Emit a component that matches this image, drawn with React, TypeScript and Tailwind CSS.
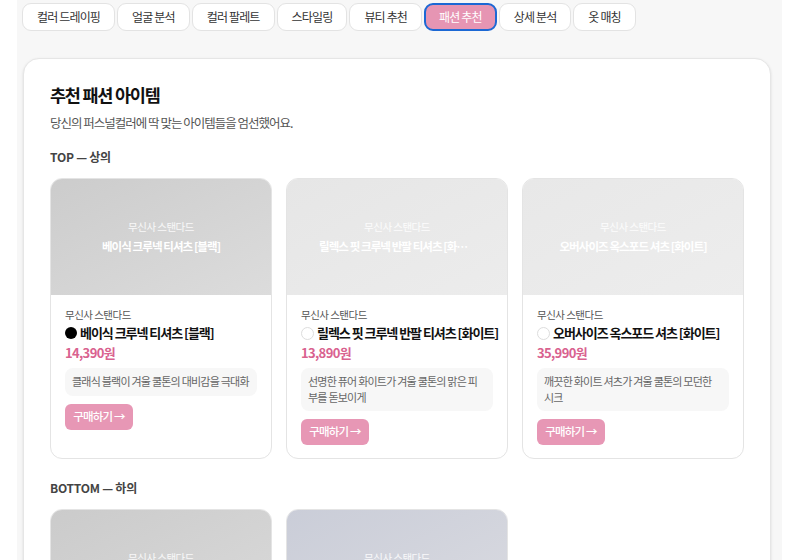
import React from "react";

type Item = {
  brand: string;
  name: string;
  price: string;
  desc: string;
  swatch: "black" | "white";
  bg: string;
};

const tabs = [
  "컬러 드레이핑",
  "얼굴 분석",
  "컬러 팔레트",
  "스타일링",
  "뷰티 추천",
  "패션 추천",
  "상세 분석",
  "옷 매칭",
];

const tops: Item[] = [
  {
    brand: "무신사 스탠다드",
    name: "베이식 크루넥 티셔츠 [블랙]",
    price: "14,390원",
    desc: "클래식 블랙이 겨울 쿨톤의 대비감을 극대화",
    swatch: "black",
    bg: "bg-gradient-to-br from-[#cccccc] to-[#dcdcdc]",
  },
  {
    brand: "무신사 스탠다드",
    name: "릴렉스 핏 크루넥 반팔 티셔츠 [화이트]",
    price: "13,890원",
    desc: "선명한 퓨어 화이트가 겨울 쿨톤의 맑은 피부를 돋보이게",
    swatch: "white",
    bg: "bg-gradient-to-br from-[#e6e6e6] to-[#ececec]",
  },
  {
    brand: "무신사 스탠다드",
    name: "오버사이즈 옥스포드 셔츠 [화이트]",
    price: "35,990원",
    desc: "깨끗한 화이트 셔츠가 겨울 쿨톤의 모던한 시크",
    swatch: "white",
    bg: "bg-gradient-to-br from-[#e8e8e8] to-[#ededed]",
  },
];

const bottoms: Item[] = [
  {
    brand: "무신사 스탠다드",
    name: "와이드 데님 팬츠 [블랙]",
    price: "39,900원",
    desc: "",
    swatch: "black",
    bg: "bg-gradient-to-br from-[#cbcbcb] to-[#dadada]",
  },
  {
    brand: "무신사 스탠다드",
    name: "스트레이트 슬랙스 [차콜]",
    price: "32,900원",
    desc: "",
    swatch: "black",
    bg: "bg-gradient-to-br from-[#cacdd8] to-[#dadbe1]",
  },
];

const ProductCard: React.FC<{ item: Item }> = ({ item }) => (
  <div className="flex flex-col overflow-hidden rounded-xl border border-[#e4e4e4] bg-white">
    <div
      className={`flex h-[116px] flex-col items-center justify-center px-8 text-white ${item.bg}`}
    >
      <div className="text-[10.5px] leading-4 tracking-[-0.05em] text-white/85">
        {item.brand}
      </div>
      <div className="mt-[2px] w-full truncate text-center text-[11.5px] font-semibold leading-[18px] tracking-[-0.08em]">
        {item.name}
      </div>
    </div>
    <div className="flex flex-1 flex-col px-[14px] pt-3 pb-[13px]">
      <div className="text-[10.5px] leading-4 tracking-[-0.05em] text-[#555]">
        {item.brand}
      </div>
      <div className="flex items-center gap-[3px] text-[13px] font-bold leading-5 tracking-[-0.08em] text-[#111]">
        <span
          className={
            item.swatch === "black"
              ? "h-3 w-3 shrink-0 rounded-full bg-black"
              : "h-[13px] w-[13px] shrink-0 rounded-full border border-[#ddd] bg-white"
          }
        />
        <span className="whitespace-nowrap">{item.name}</span>
      </div>
      <div className="text-[13px] font-semibold leading-5 tracking-[-0.05em] text-[#d9628f]">
        {item.price}
      </div>
      {item.desc && (
        <div className="mt-[5px] rounded-lg bg-[#f7f7f7] px-[7px] py-[6px] text-[11px] leading-[15.5px] tracking-[-0.07em] text-[#666]">
          {item.desc}
        </div>
      )}
      <div className="mt-2 flex">
        <button className="h-[26px] w-[68px] rounded-md bg-[#e797b5] text-[11.5px] font-medium tracking-[-0.07em] text-white">
          구매하기 →
        </button>
      </div>
    </div>
  </div>
);

export default function App() {
  return (
    <div
      className="min-h-[560px] bg-white"
      style={{ fontFamily: '"Noto Sans CJK KR", "Noto Sans", sans-serif' }}
    >
      <div className="ml-[17px] min-h-[560px] w-[765px] bg-[#f7f7f7]">
        {/* tab bar */}
        <div className="flex gap-[2px] px-[5px] pt-[3px]">
          {tabs.map((t) =>
            t === "패션 추천" ? (
              <button
                key={t}
                className="h-[28px] rounded-[9px] border-2 border-[#1c68d4] bg-[#e695b3] px-[13px] text-[12px] leading-4 tracking-[-0.07em] text-white"
              >
                {t}
              </button>
            ) : (
              <button
                key={t}
                className="h-[28px] rounded-[9px] border border-[#e3e3e3] bg-white px-[14px] text-[12px] leading-4 tracking-[-0.07em] text-[#333]"
              >
                {t}
              </button>
            )
          )}
        </div>

        {/* recommendations panel */}
        <div className="mt-[27px] ml-[6px] w-[748px] rounded-2xl border border-[#e6e6e6] bg-white px-[26px] pt-[22px] pb-8 shadow-sm">
          <h2 className="text-[17.5px] font-bold leading-7 tracking-[-0.07em] text-[#111]">
            추천 패션 아이템
          </h2>
          <p className="mt-1 text-[12.5px] leading-5 tracking-[-0.08em] text-[#555]">
            당신의 퍼스널컬러에 딱 맞는 아이템들을 엄선했어요.
          </p>

          <div className="mt-[15px] text-[12px] font-bold leading-[18px] tracking-[-0.02em] text-[#444]">
            TOP — 상의
          </div>
          <div className="mt-3 grid grid-cols-3 gap-[14px]">
            {tops.map((it) => (
              <ProductCard key={it.name} item={it} />
            ))}
          </div>

          <div className="mt-5 text-[12px] font-bold leading-[18px] tracking-[-0.02em] text-[#444]">
            BOTTOM — 하의
          </div>
          <div className="mt-3 grid grid-cols-3 gap-[14px]">
            {bottoms.map((it) => (
              <ProductCard key={it.name} item={it} />
            ))}
          </div>
        </div>
      </div>
    </div>
  );
}
